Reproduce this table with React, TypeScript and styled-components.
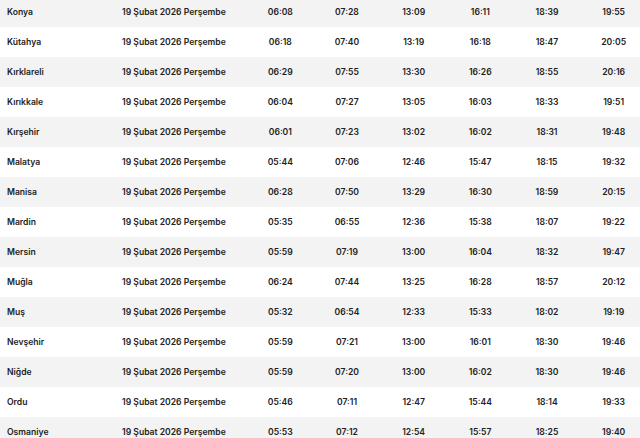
import { FC } from 'react'
import styled, { createGlobalStyle } from 'styled-components'

const GlobalStyle = createGlobalStyle`
  html,
  body {
    margin: 0;
    padding: 0;
    overflow: hidden;
    background: #ffffff;
  }
  body {
    font-family: Inter, 'Noto Sans', 'Liberation Sans', sans-serif;
    color: #222222;
  }
`

const Table = styled.div`
  width: 647px;
  margin-top: -3px;
`
const Row = styled.div<{ $shaded: boolean }>`
  display: grid;
  grid-template-columns: 115px 132px repeat(6, 1fr);
  align-items: center;
  height: 30px;
  background: ${({ $shaded }) => ($shaded ? '#f3f3f3' : '#ffffff')};
  font-size: 8.6px;
  font-weight: 600;
`
const City = styled.div`
  padding-left: 7px;
  white-space: nowrap;
`
const DateCell = styled.div`
  padding-left: 7px;
  white-space: nowrap;
`
const Time = styled.div`
  text-align: center;
`

const rows: [string, string[]][] = [
  ['Konya', ['06:08', '07:28', '13:09', '16:11', '18:39', '19:55']],
  ['Kütahya', ['06:18', '07:40', '13:19', '16:18', '18:47', '20:05']],
  ['Kırklareli', ['06:29', '07:55', '13:30', '16:26', '18:55', '20:16']],
  ['Kırıkkale', ['06:04', '07:27', '13:05', '16:03', '18:33', '19:51']],
  ['Kırşehir', ['06:01', '07:23', '13:02', '16:02', '18:31', '19:48']],
  ['Malatya', ['05:44', '07:06', '12:46', '15:47', '18:15', '19:32']],
  ['Manisa', ['06:28', '07:50', '13:29', '16:30', '18:59', '20:15']],
  ['Mardin', ['05:35', '06:55', '12:36', '15:38', '18:07', '19:22']],
  ['Mersin', ['05:59', '07:19', '13:00', '16:04', '18:32', '19:47']],
  ['Muğla', ['06:24', '07:44', '13:25', '16:28', '18:57', '20:12']],
  ['Muş', ['05:32', '06:54', '12:33', '15:33', '18:02', '19:19']],
  ['Nevşehir', ['05:59', '07:21', '13:00', '16:01', '18:30', '19:46']],
  ['Niğde', ['05:59', '07:20', '13:00', '16:02', '18:30', '19:46']],
  ['Ordu', ['05:46', '07:11', '12:47', '15:44', '18:14', '19:33']],
  ['Osmaniye', ['05:53', '07:12', '12:54', '15:57', '18:25', '19:40']],
]

const App: FC = () => {
  return (
    <>
      <GlobalStyle />
      <Table>
        {rows.map(([city, times], i) => (
          <Row key={city} $shaded={i % 2 === 0}>
            <City>{city}</City>
            <DateCell>19 Şubat 2026 Perşembe</DateCell>
            {times.map((t, j) => (
              <Time key={j}>{t}</Time>
            ))}
          </Row>
        ))}
      </Table>
    </>
  )
}

export default App
